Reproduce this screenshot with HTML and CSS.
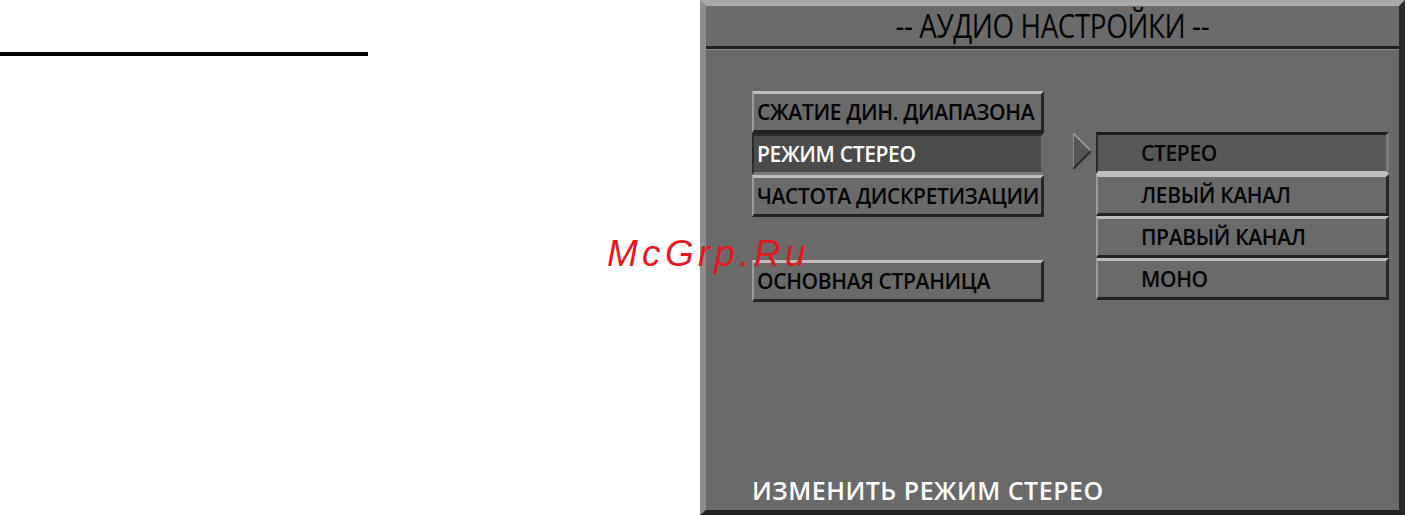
FILE: index.html
```html
<!DOCTYPE html>
<html lang="ru">
<head>
<meta charset="utf-8">
<title>Аудио настройки</title>
<link rel="stylesheet" href="styles.css">
</head>
<body>
<div class="page">
  <div class="left">
    <div class="rule"></div>
  </div>
  <div class="panel">
    <div class="title"><span class="title-text">-- АУДИО НАСТРОЙКИ --</span></div>
    <div class="content">
      <div class="menus">
        <div class="col-left">
          <div class="btn">СЖАТИЕ ДИН. ДИАПАЗОНА</div>
          <div class="btn btn-active">РЕЖИМ СТЕРЕО</div>
          <div class="btn">ЧАСТОТА ДИСКРЕТИЗАЦИИ</div>
          <div class="btn btn-main">ОСНОВНАЯ СТРАНИЦА</div>
        </div>
        <div class="pointer">
          <svg width="18" height="36" viewBox="0 0 18 36">
            <polygon points="0,0 18,18 0,36" fill="#555"/>
            <polyline points="0,36 0,0 18,18" fill="none" stroke="#a0a0a0" stroke-width="1.5"/>
            <polyline points="18,18 0,36" fill="none" stroke="#2a2a2a" stroke-width="2"/>
          </svg>
        </div>
        <div class="col-right">
          <div class="opt opt-active">СТЕРЕО</div>
          <div class="opt">ЛЕВЫЙ КАНАЛ</div>
          <div class="opt">ПРАВЫЙ КАНАЛ</div>
          <div class="opt">МОНО</div>
        </div>
      </div>
      <div class="footer">ИЗМЕНИТЬ РЕЖИМ СТЕРЕО</div>
    </div>
  </div>
  <div class="watermark">McGrp.Ru</div>
</div>
</body>
</html>
```

FILE: styles.css
```css
html, body {
  margin: 0;
  padding: 0;
  background: #ffffff;
}
.page {
  position: relative;
  display: flex;
  width: 1405px;
  height: 515px;
  overflow: hidden;
  font-family: "Open Sans", "Noto Sans", sans-serif;
}
.left {
  width: 700px;
  flex: none;
  padding-top: 52px;
  box-sizing: border-box;
}
.rule {
  width: 368px;
  height: 4px;
  background: #000;
}
.panel {
  width: 705px;
  flex: none;
  box-sizing: border-box;
  display: flex;
  flex-direction: column;
  background: #6a6a6a;
  border-top: 6px solid #a9a9a9;
  border-left: 6px solid #8c8c8c;
  border-right: 6px solid #2b2b2b;
  border-bottom: 5px solid #232323;
}
.title {
  height: 40px;
  flex: none;
  display: flex;
  align-items: center;
  justify-content: center;
  background: #6b6b6b;
  border-bottom: 3px solid #1e1e1e;
  box-shadow: 0 1px 0 #8a8a8a;
}
.title-text {
  display: inline-block;
  font-size: 32px;
  color: #050505;
  transform: scaleX(0.87);
  letter-spacing: -0.5px;
  line-height: 40px;
}
.content {
  flex: 1;
  display: flex;
  flex-direction: column;
  padding: 42px 0 0 46px;
}
.menus {
  display: flex;
  align-items: flex-start;
}
.col-left {
  width: 292px;
  display: flex;
  flex-direction: column;
}
.btn, .opt {
  height: 42px;
  box-sizing: border-box;
  display: flex;
  align-items: center;
  font-size: 21px;
  font-weight: 600;
  color: #050505;
  background: #6a6a6a;
  border-top: 3px solid #bdbdbd;
  border-left: 2px solid #9a9a9a;
  border-right: 3px solid #262626;
  border-bottom: 3px solid #222;
  white-space: nowrap;
  letter-spacing: -0.35px;
}
.btn {
  padding-left: 3px;
}
.btn-active {
  background: #4b4b4b;
  color: #ffffff;
  border-top: 3px solid #2a2a2a;
  border-left: 2px solid #2a2a2a;
  border-right: 3px solid #6a6a6a;
  border-bottom: 3px solid #7a7a7a;
}
.btn-main {
  margin-top: 43px;
}
.pointer {
  margin: 42px 5px 0 29px;
  width: 18px;
  height: 36px;
}
.pointer svg {
  display: block;
}
.col-right {
  width: 293px;
  margin-top: 41px;
  display: flex;
  flex-direction: column;
}
.opt {
  padding-left: 43px;
}
.opt-active {
  background: #585858;
  border-top: 3px solid #1e1e1e;
  border-left: 2px solid #2a2a2a;
  border-right: 3px solid #7c7c7c;
  border-bottom: 3px solid #c0c0c0;
}
.footer {
  margin-top: auto;
  margin-bottom: 4px;
  font-size: 25px;
  font-weight: 600;
  color: #ffffff;
  letter-spacing: 0.5px;
  line-height: 32px;
}
.watermark {
  position: absolute;
  left: 607px;
  top: 233px;
  font-family: "Liberation Sans", Arial, sans-serif;
  font-style: italic;
  font-size: 37px;
  letter-spacing: 4.3px;
  color: #e3191f;
}
```
